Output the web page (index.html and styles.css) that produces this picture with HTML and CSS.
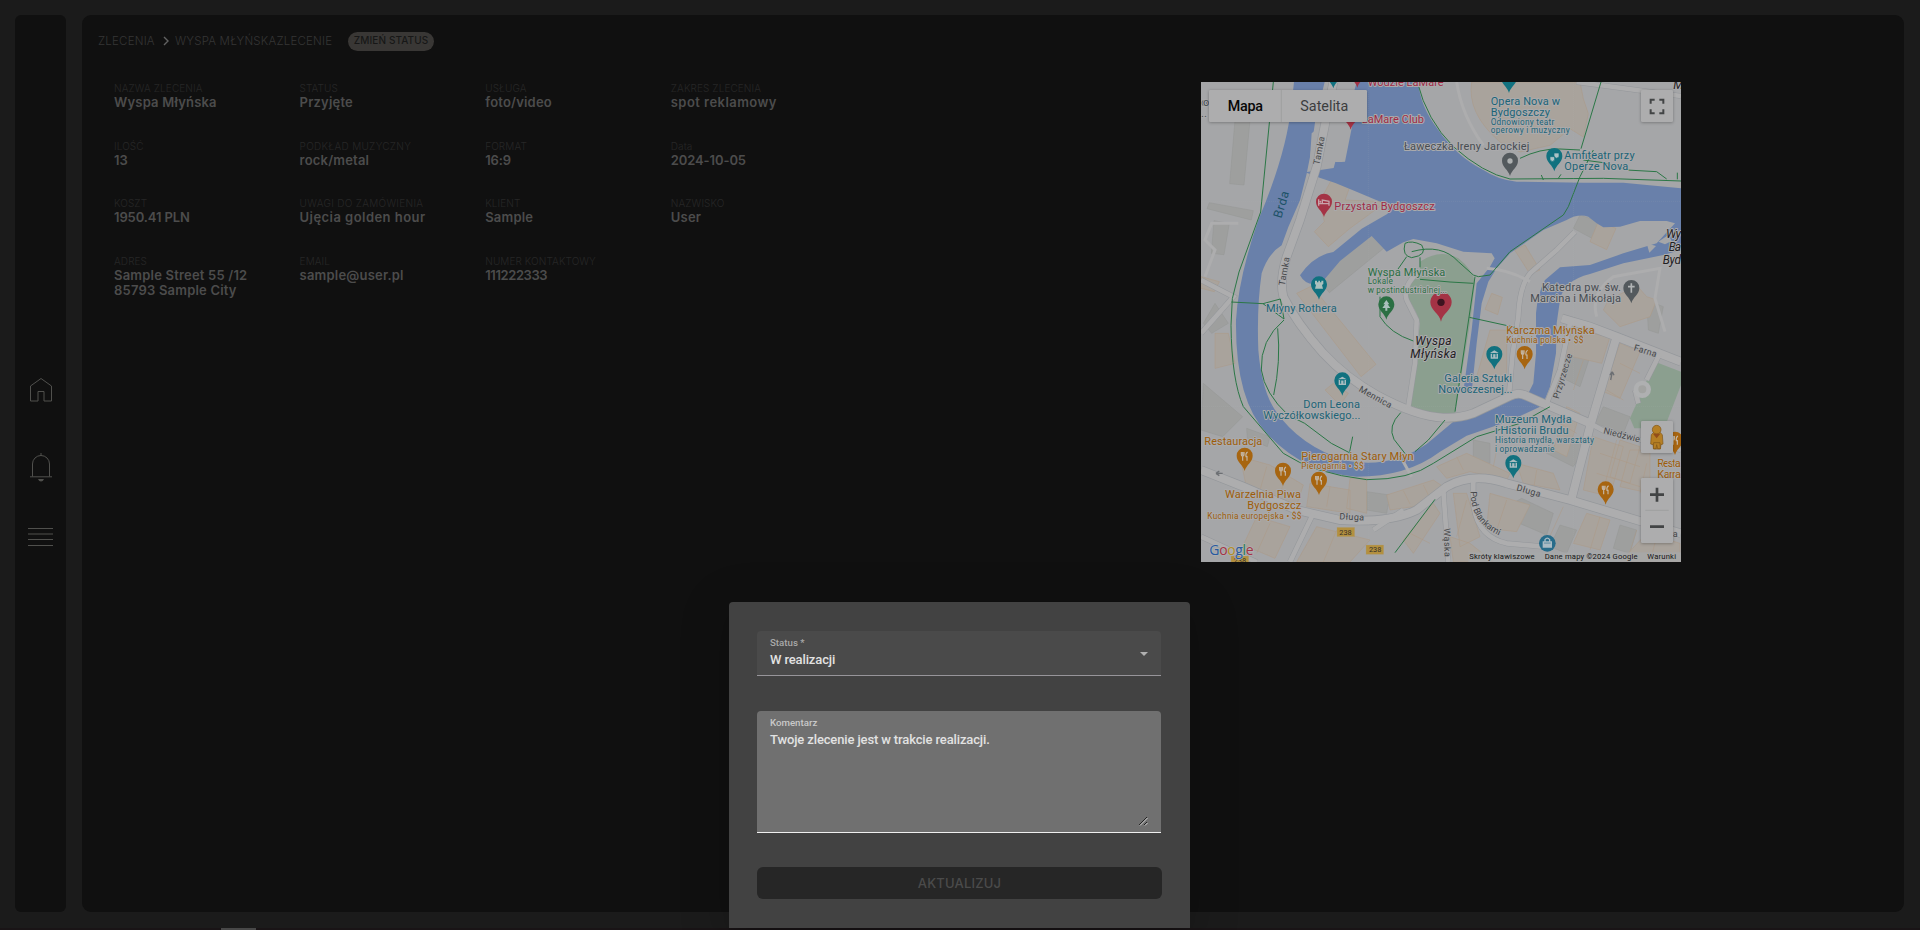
FILE: index.html
```html
<!DOCTYPE html>
<html lang="pl">
<head>
<meta charset="utf-8">
<title>Zlecenie</title>
<link rel="stylesheet" href="styles.css">
</head>
<body>
<div class="shell">
  <nav class="side">
    <svg class="ico" width="26" height="26" viewBox="0 0 26 26"><path d="M2.500 24V9L13 1.500 23.500 9v15H16V14.500h-6V24z"/></svg>
    <svg class="ico bell" width="26" height="30" viewBox="0 0 26 30"><path d="M4.500 24.500V12a8.500 8.500 0 0 1 17 0v12.500M2 24.800h22M13 1v3"/><path class="fill" d="M10 27h6q-1 2.500-3 2.500t-3-2.500z"/></svg>
    <svg class="ico menu" width="26" height="20" viewBox="0 0 26 20"><path d="M0 1.500h25M0 7h25M0 12.500h25M0 18.500h25"/></svg>
  </nav>
  <main class="main">
    <header class="crumbs">
      <span>ZLECENIA</span>
      <svg width="6" height="10" viewBox="0 0 6 10"><path d="M1 1l4 4-4 4"/></svg>
      <span class="current">WYSPA MŁYŃSKAZLECENIE</span>
      <button class="chip">ZMIEŃ STATUS</button>
    </header>
    <div class="content">
      <dl class="grid">
        <div><dt>NAZWA ZLECENIA</dt><dd>Wyspa Młyńska</dd></div>
        <div><dt>STATUS</dt><dd>Przyjęte</dd></div>
        <div><dt>USŁUGA</dt><dd>foto/video</dd></div>
        <div><dt>ZAKRES ZLECENIA</dt><dd class="wide">spot reklamowy</dd></div>
        <div><dt>ILOŚĆ</dt><dd class="num">13</dd></div>
        <div><dt class="wide">PODKŁAD MUZYCZNY</dt><dd>rock/metal</dd></div>
        <div><dt>FORMAT</dt><dd class="num">16:9</dd></div>
        <div><dt>Data</dt><dd class="num">2024-10-05</dd></div>
        <div><dt>KOSZT</dt><dd class="num">1950.41 PLN</dd></div>
        <div><dt class="wide">UWAGI DO ZAMÓWIENIA</dt><dd class="wide">Ujęcia golden hour</dd></div>
        <div><dt>KLIENT</dt><dd>Sample</dd></div>
        <div><dt>NAZWISKO</dt><dd>User</dd></div>
        <div><dt>ADRES</dt><dd>Sample Street 55 /12<br>85793 Sample City</dd></div>
        <div><dt>EMAIL</dt><dd>sample@user.pl</dd></div>
        <div><dt>NUMER KONTAKTOWY</dt><dd class="tight">111222333</dd></div>
      </dl>
      <div class="map">
      <svg width="480" height="480" viewBox="33 36 1440 1440">
        <defs>
          <path id="drop" d="M0 43C-5 24-24 16-24-3a24 24 0 0 1 48 0C24 16 5 24 0 43z"/>
          <path id="fork" d="M-10-14v8q0 4 4 4v14M-6-14v10M-2-14v8q0 4-4 4M9-14q-7 3-5 14h3v12" fill="none" stroke="#c4b7a6" stroke-width="3.500"/>
          <path id="museum" d="M-13-6L0-14l13 8zM-11-4h22v15h-22z" fill="#a9bcc0"/>
          <path id="roads" d="M430 36L380 290 330 450 290 560Q268 630 280 680 320 760 400 850 470 925 560 975 680 1040 760 1043 810 1045 850 1030L960 978Q985 965 1010 978L1060 1000 1200 1060M33 1200L160 1250 320 1320 450 1350Q600 1360 680 1320L770 1250Q850 1205 950 1240L1140 1290 1473 1390M1115 745L1200 770 1280 800 1473 875M1280 800L1250 900 1200 1070 1145 1285"/>
          <path id="lanes" d="M655 1010L675 880 680 750 650 690Q635 650 690 600M958 965L968 850 985 740Q988 650 1020 610L1100 540 1155 485M1140 760L1110 900 1070 1000M550 1380L640 1320M33 1400L200 1476M370 1330L300 1476M850 1225V1300Q860 1400 950 1420L1060 1430M760 1260L775 1476M33 630L130 680 95 720 33 790M1200 1060L1240 1082 1473 1140M1160 36L1473 78M1345 1000L1335 960M1370 930L1410 850"/>
        </defs>
        <rect class="land" x="33" y="36" width="1440" height="1440"/>

        <!-- buildings -->
        <g class="bgray">
          <path d="M135 150h45l-18 195-43-4zM58 398l132 24-6 28-133-34zM72 452l46 8-16 94-38-4zM40 940l118 100-60 60-65-20zM170 1075l70 25-8 30-60-25zM545 478l48 47-175 143-35-43zM1170 435l75 25-30 50-65-35z"/>
          <path d="M1150 810l60 20-40 120-60-30zM1240 1010l80 30-20 50-85-30zM1070 1150l60-60 60 40-40 60zM850 1110l50 10v60h-50zM950 1310l45-25 95 45-20 65-140-60zM1110 1365l50 15-30 70-50-20zM530 1265l70 10-10 55-60-10zM1290 1365l50 15-20 70-50-15zM40 760l35-60 40 60-50 30zM1370 690l50 20-15 80-30-10z"/>
        </g>
        <g class="beige">
          <path d="M430 320l55 15-20 55 125 5-110 80-65 55-42-45 30-30-15-60zM320 670l45-22 193 235-45 37zM430 940l45 30-25 35-45-45zM845 36h325l10 50 15 45-15 70-40-25-60 50-90 20-60-30Q830 130 845 36zM1005 525l45 75-30 12-46-72zM1225 455l53 20-28 64-50-24zM905 670l32 12-14 52-38-16z"/>
          <path d="M1255 690l60-30 20-20 35 40 30 10-20 50-90 30-50-50zM900 780h50v130l-60 30-30-20zM1140 780l120 20-25 80-110-25zM1290 820l60 25-60 140-50-20zM75 790h40l20 90-60 15zM33 620l55 15-15 30-40-10zM150 1160l90 25 100 60-20 60-150-50zM360 1240l120 20v70l-130-20zM480 1225h50v105l-60-15zM590 1275l140-45 30 20-90 60-70 10zM200 1340l100 30-45 95-95-40zM380 1370l160 40-60 66H320zM640 1410l90-110 20 30-80 120z"/>
          <path d="M740 1190l90-40 130 60-10 20-110-25-70 20zM980 1180l110 30 20 50-110-20zM1210 1100l90 30-40 150-80-20zM1320 1140h60v130l-90-20zM790 1270h40l40 130-60 30zM900 1270l120 35-40 80-90-10zM1190 1330l70 20-30 90-80-20zM1370 1390l100 30v56H1290zM780 1400l60 20 70 56H790zM1130 1010l40 20-40 130-40-20zM1290 1110l60 20-30 110-60-20z"/>
        </g>
        <path class="parcels" d="M230 1190l-20 70M290 1215l-25 70M420 1250l-10 60M640 1262l20 40M700 1245l20 40M1180 870l-30 90M1290 880l60 30M1250 960l50 30M1280 1110l-40 150M1230 1150l120 40M1220 1210l130 40M1110 1060l50 30M920 1140l-10 50M800 1160l20 40M1040 1200l-10 60M1120 1310l-50 110M1230 1340l-30 100M1340 1380l-30 96M1400 1400l-20 76M830 1290l-30 110M950 1290l-30 90M240 1360l-40 90M440 1380l-40 96M660 1390l60 30M1370 1180l-20 90"/>
        <path class="park" d="M690 575Q750 535 805 565 850 600 855 640L840 760 795 1032Q710 1030 658 1015L690 760Q680 720 655 690 640 640 690 620z"/>
        <path class="park" d="M1395 875l78 30v40l-50 130-90 0-13-30z"/>

        <!-- rivers -->
        <path class="water" d="M312 36h92l-28 115-16 110-10 50-20 80-35 80-20 55q-40 24-60 84-15 100-10 230Q215 960 255 1020 330 1130 470 1172q130 25 240-50l80-67 170-65 45-10 55 15-10 15-90 42-130 45-80 48q-100 75-250 75-160-10-270-130Q135 990 138 750 146 620 205 450 290 250 305 100z"/>
        <path class="water" d="M500 36h185Q690 110 745 180q55 80 135 120 45 30 100 35l200 3h120l173 17v185l-53 15-120 25-100 32q-80 20-90 78l-10 70-2 90-18 100-20 50-50-20 20-40 8-90v-120q5-60 27-100l45-38 90-7 100-35 100-30 55-60-25-7h-80l-60 17-50 2-20-12-25-20q-30-10-65 10l-70 30-100 70-40 45-25 40-20 65-15 120-15 145h-25l25-185 15-140 40-50 14-25-9-15-85-5-80-25-70-13-30 10-50 28-45-47-95 75-55 65q-45 15-65-22 40-60 100-70l85-70 78-45 3-25-100-42-60-25-45-15-45-17 85-13z"/>
        <path class="land" d="M365 190l50-40h75l-25 125q-50 5-105-12zM1370 520l28 8-20 20zM1405 515l30-20 10 18-20 10z"/>

        <!-- streets -->
        <g class="casing"><use href="#roads" stroke-width="28"/><use href="#lanes" stroke-width="17"/></g>
        <g class="street"><use href="#roads" stroke-width="24"/><use href="#lanes" stroke-width="14"/><path d="M800 36q15 100 80 190M45 620l30-80-30-30 20-50h80M890 595q70 5 130 40M1220 740q-20-70 50-120l140-25-15 90 30 100M640 1175l25 45" stroke-width="9"/></g>
        <circle cx="1357" cy="958" r="19" fill="#a2a3a1" stroke="#afb0b1" stroke-width="14"/>

        <!-- footpaths -->
        <g class="path">
          <path d="M250 36l-38 390-65 180-20 80-4 80Q125 930 160 1010l120 140q90 60 250 79 130 0 200-49l130-80 130-40 90-50M124 696l95 5 52-14 11 60-63-46M282 750Q210 810 214 900q10 70 80 135l50 25 80 60 54 28M263 775q10 100-12 200M478 1150l10-50M570 740q30 50 100 73M632 1028q-40 40-20 80l35 45M765 1050l-50 60-40 35M615 1448l120-160"/>
          <path d="M682 36Q710 150 790 230 880 310 960 327l280-2 233 8M1233 36l-60 200M1210 240l-40 80-35 90-15 25-160 110-60 70-35 5-15-5-45-40q-50-55-140-30M690 628l90 8 70 4M645 520q20-10 50 5 20 30-30 38-30-5-20-43zM650 560l-35 50M690 562v30M838 742l137 30M990 265q60-30 120-28l60 3M1180 270l60 8 70 22 90 5 30 22M855 620L795 1025M1060 330l-6-15M1105 325l8-12M1462 328v-20M570 740v-60"/>
        </g>
        <path class="tiles" d="M535 36v1440M1151 36v1440M33 394h1440M33 1010h1440"/>
        <path d="M98 1210H78m0 0l10-7m-10 7l10 7M1262 930l5-25m0 0l-7 10m7-10l5 11" fill="none" stroke="#6c6f73" stroke-width="4"/>

        <!-- pins -->
        <g class="teal"><use href="#drop" x="430" y="12"/><use href="#drop" x="387" y="646"/><use href="#drop" x="957" y="26"/><use href="#drop" x="1093" y="261"/><use href="#drop" x="457" y="934"/><use href="#drop" x="913" y="855"/><use href="#drop" x="970" y="1182"/></g>
        <g class="red"><use href="#drop" x="502" y="10"/><use href="#drop" x="482" y="136"/><use href="#drop" x="402" y="398"/></g>
        <g class="grayp"><use href="#drop" x="960" y="275"/><use href="#drop" x="1324" y="657"/></g>
        <g class="orange"><use href="#drop" x="164" y="1160"/><use href="#drop" x="279" y="1205"/><use href="#drop" x="387" y="1232"/><use href="#drop" x="1004" y="855"/><use href="#drop" x="1247" y="1261"/><use href="#drop" x="1455" y="1112"/></g>
        <use href="#drop" x="589" y="706" fill="#2b6f43"/>
        <use href="#fork" x="164" y="1160"/><use href="#fork" x="279" y="1205"/><use href="#fork" x="387" y="1232"/><use href="#fork" x="1004" y="855"/><use href="#fork" x="1247" y="1261"/><use href="#fork" x="1455" y="1112"/>
        <use href="#museum" x="457" y="934"/><use href="#museum" x="913" y="855"/><use href="#museum" x="970" y="1182"/>
        <path d="M452 941v-11h10v11M908 862v-11h10v11M965 1189v-11h10v11" stroke="#11717f" stroke-width="3" fill="none"/>
        <path d="M375 632h6v5h4v-5h5v5h4v-5h6v10l-4 3 3 11h-24l3-11-3-3zM589 690l9 13h-5l8 11h-9v8h-6v-8h-9l8-11h-5z" fill="#aac0bd"/>
        <path d="M386 388v19m0-6h31v6m0-6v-7l-20-4v11" stroke="#c8a3aa" stroke-width="4" fill="none"/><circle cx="391" cy="395" r="3" fill="#c8a3aa"/>
        <circle cx="960" cy="273" r="8" fill="#adb0b1"/><path d="M1324 640v28m-10-18h20" stroke="#b1b4b5" stroke-width="5"/>
        <path d="M1080 260h14v10q-7 9-14 0zM1092 249h15v12q-7 7-15 0z" fill="#adc2c5" stroke="#11717f" stroke-width="2"/>
        <path d="M753 755c-4-24-32-34-32-58a32 32 0 0 1 64 0c0 24-28 34-32 58z" fill="#a43345"/><circle cx="753" cy="697" r="11" fill="#3d1420"/>
        <circle cx="1072" cy="1420" r="25" fill="#276c8a"/><path d="M1060 1416h24v15h-24zM1065 1415v-6q7-9 14 0v6" fill="none" stroke="#a9bbc4" stroke-width="4"/><path d="M1060 1420h24v11h-24z" fill="#a9bbc4"/>

        <!-- labels -->
        <g class="lbl tealt">
          <text x="902" y="106" textLength="208">Opera Nova w</text><text x="902" y="139" textLength="178">Bydgoszczy</text>
          <text class="sub" x="902" y="164" textLength="191">Odnowiony teatr</text><text class="sub" x="902" y="190" textLength="237">operowy i muzyczny</text>
          <text x="1123" y="266" textLength="211">Amfiteatr przy</text><text x="1123" y="300" textLength="192">Operze Nova</text>
          <text x="228" y="726" textLength="212">Młyny Rothera</text>
          <text x="340" y="1014" textLength="170">Dom Leona</text><text x="220" y="1047" textLength="291">Wyczółkowskiego...</text>
          <text x="763" y="935" textLength="203">Galeria Sztuki</text><text x="745" y="968" textLength="222">Nowoczesnej...</text>
          <text x="915" y="1059" textLength="230">Muzeum Mydła</text><text x="915" y="1092" textLength="221">i Historii Brudu</text>
          <text class="sub" x="915" y="1120" textLength="297">Historia mydła, warsztaty</text><text class="sub" x="915" y="1146" textLength="178">i oprowadzanie</text>
        </g>
        <g class="lbl grayt"><text x="34" y="108" textLength="24">oo</text><text x="33" y="142">..</text></g>
        <g class="lbl redt"><text x="533" y="48" textLength="228">Wodzie LaMare</text><text x="515" y="158" textLength="187">LaMare Club</text><text x="433" y="419" textLength="301">Przystań Bydgoszcz</text></g>
        <g class="lbl grayt"><text x="642" y="240" textLength="376">Ławeczka Ireny Jarockiej</text><text x="1056" y="663" textLength="237">Katedra pw. św.</text><text x="1021" y="696" textLength="272">Marcina i Mikołaja</text></g>
        <g class="lbl greent"><text x="533" y="617" textLength="233">Wyspa Młyńska</text><text class="sub" x="533" y="642" textLength="76">Lokale</text><text class="sub" x="533" y="668" textLength="238">w postindustrialnej...</text></g>
        <g class="lbl oranget">
          <text x="43" y="1124" textLength="174">Restauracja</text><text x="334" y="1169" textLength="337">Pierogarnia Stary Młyn</text><text class="sub" x="334" y="1197" textLength="187">Pierogarnia • $$</text>
          <text x="105" y="1284" textLength="228">Warzelnia Piwa</text><text x="172" y="1318" textLength="162">Bydgoszcz</text><text class="sub" x="52" y="1346" textLength="282">Kuchnia europejska • $$</text>
          <text x="949" y="792" textLength="265">Karczma Młyńska</text><text class="sub" x="949" y="818" textLength="231">Kuchnia polska • $$</text>
          <text x="1402" y="1191" textLength="70">Resta</text><text x="1402" y="1225" textLength="71">Karra</text>
        </g>
        <g class="lbl area"><text x="676" y="826" textLength="109">Wyspa</text><text x="661" y="864" textLength="138">Młyńska</text><text x="1428" y="504" textLength="45">Wy</text><text x="1436" y="542" textLength="37">Ba</text><text x="1418" y="581" textLength="55">Byd</text><text x="1450" y="58" textLength="23">M</text></g>
        <g class="lbl road">
          <text transform="translate(388 286) rotate(-79)" textLength="86">Tamka</text><text transform="translate(284 648) rotate(-80)" textLength="86">Tamka</text>
          <text transform="translate(505 963) rotate(29)" textLength="108">Mennica</text><text transform="translate(448 1348) rotate(3)" textLength="74">Długa</text><text transform="translate(978 1261) rotate(16)" textLength="74">Długa</text>
          <text transform="translate(1106 988) rotate(-73)" textLength="140">Przyrzecze</text><text transform="translate(1330 841) rotate(17)" textLength="70">Farna</text><text transform="translate(1239 1090) rotate(14)" textLength="112">Niedźwie</text>
          <text transform="translate(762 1375) rotate(89)" textLength="86">Wąska</text>
          <path id="blank" d="M842 1264Q840 1365 942 1402" fill="none" stroke="none"/><text><textPath href="#blank" textLength="168">Pod Blankami</textPath></text>
          <text x="1448" y="1400">a</text>
        </g>
        <text class="river" transform="translate(274 446) rotate(-73)" textLength="82">Brda</text>
        <g class="shield"><rect x="441" y="1372" width="53" height="28"/><rect x="528" y="1425" width="53" height="28"/><rect x="123" y="1458" width="53" height="28"/><text x="448" y="1394">238</text><text x="537" y="1447">238</text><text x="131" y="1480">238</text></g>
        <rect x="835" y="1447" width="638" height="29" fill="#a7a8a9" opacity=".75"/>
        <g class="legal"><text x="838" y="1467" textLength="196">Skróty klawiszowe</text><text x="1064" y="1467" textLength="279">Dane mapy ©2024 Google</text><text x="1372" y="1467" textLength="86">Warunki</text></g>
        <text class="glogo" x="58" y="1456" textLength="133"><tspan fill="#27599f">G</tspan><tspan fill="#a43345">o</tspan><tspan fill="#b18d24">o</tspan><tspan fill="#27599f">g</tspan><tspan fill="#287b50">l</tspan><tspan fill="#a43345">e</tspan></text>

        <!-- controls -->
        <g class="ctl"><rect x="57" y="60" width="474" height="96" rx="4"/><rect x="1353" y="60" width="96" height="96" rx="4"/><rect x="1353" y="1053" width="96" height="96" rx="4"/><rect x="1353" y="1224" width="96" height="195" rx="4"/></g>
        <path d="M274 60v96M1366 1321h70" stroke="#979899" stroke-width="2"/>
        <text class="tab on" x="113" y="123" textLength="106">Mapa</text><text class="tab" x="331" y="123" textLength="144">Satelita</text>
        <path d="M1382 101V89h12M1408 89h12v12M1420 118v12h-12M1394 130h-12v-12" fill="none" stroke="#424445" stroke-width="6"/><path d="M1380 1274h42M1401 1253v42M1380 1370h42" stroke="#424445" stroke-width="8"/>
        <g fill="#b57f24" stroke="#7f5518" stroke-width="2"><path d="M1384 1094l8-8h17l8 8 2 28-6 2-2 13h-20l-2-13-7-2z"/><path d="M1391 1118l-1 18h8l2-12 3 12h8l-1-18z"/><circle cx="1400" cy="1079" r="13"/></g><path d="M1389 1091l11 14 11-14z" fill="#934d18"/>
      </svg>
      </div>
    </div>
  </main>
</div>
<footer class="strip"><i></i></footer>

<div class="overlay">
  <form class="dialog">
    <div class="field">
      <label>Status *</label>
      <p>W realizacji</p>
      <svg class="caret" width="8" height="4" viewBox="0 0 8 4"><path d="M0 0h8L4 4z"/></svg>
    </div>
    <div class="field area-field">
      <label>Komentarz</label>
      <p>Twoje zlecenie jest w trakcie realizacji.</p>
      <svg class="grip" width="10" height="10" viewBox="0 0 10 10"><path d="M1 9l8-8M6 9l3-3" stroke="#222"/><path d="M2 9.500l7.500-7.500M7 9.500l2.500-2.500" stroke="#ccc"/></svg>
    </div>
    <button type="button" class="submit">AKTUALIZUJ</button>
  </form>
</div>
</body>
</html>
```
FILE: styles.css
```css
* { box-sizing: border-box; }
body { margin: 0; height: 930px; overflow: hidden; background: #1b1b1b; font-family: Inter, sans-serif; }
.shell { display: flex; gap: 16px; height: 928px; padding: 15px 16px 16px 15px; }
.side { width: 51px; border-radius: 6px; background: #101010; display: flex; flex-direction: column; align-items: center; padding-top: 362px; }
.ico { display: block; fill: none; stroke: #50504d; stroke-width: 1; }
.ico .fill { fill: #50504d; stroke: none; }
.bell { margin-top: 49px; }
.menu { margin-top: 45px; }
.main { flex: 1; border-radius: 9px; background: #101010; padding: 16px 16px; }
.crumbs { display: flex; align-items: center; height: 20px; color: #353535; font-size: 11.5px; font-weight: 300; letter-spacing: .2px; white-space: nowrap; }
.crumbs svg { margin: 0 6px 0 7px; fill: none; stroke: #626262; stroke-width: 1.4; }
.crumbs span:first-child { width: 58px; }
.current { width: 158px; }
.chip { width: 86px; height: 19px; margin-left: 15px; padding: 0 0 2px; border: 0; border-radius: 10px; background: #393735; color: #171717; font: 500 10px Inter, sans-serif; letter-spacing: .1px; }
.content { display: flex; justify-content: space-between; align-items: flex-start; padding: 15px 207px 0 16px; }
.grid { display: grid; grid-template-columns: repeat(4, 185.6px); grid-auto-rows: 57.7px; margin: 15px 0 0; }
dt { color: #272727; font-size: 10px; font-weight: 300; line-height: 14px; letter-spacing: .1px; white-space: nowrap; }
dt.wide { letter-spacing: .3px; }
dd { margin: 0; color: #4c4c4c; font-size: 13px; font-weight: 600; line-height: 15px; letter-spacing: .2px; white-space: nowrap; }
dd.wide { letter-spacing: .45px; }
.num { letter-spacing: -.1px; }
.tight { letter-spacing: -.4px; }
.map { width: 480px; height: 480px; margin-top: 16px; overflow: hidden; }
.map svg { display: block; font-family: Roboto, sans-serif; }
.land { fill: #a5a6a8; }
.bgray { fill: #9e9f9e; stroke: #959695; stroke-width: 1.5; }
.beige { fill: #a9a39c; stroke: #ac9885; stroke-width: 1.5; }
.parcels { fill: none; stroke: #ac9885; stroke-width: 1.5; }
.park { fill: #8b9f8f; }
.water { fill: #6980aa; }
.casing { fill: none; stroke: #94979b; }
.street { fill: none; stroke: #adadae; }
.path { fill: none; stroke: #2b7746; stroke-width: 3; stroke-linejoin: round; }
.tiles { fill: none; stroke: #b5b8bd; stroke-width: 1; stroke-dasharray: 3 3; opacity: .4; }
.teal { fill: #11717f; }
.red { fill: #a43345; }
.grayp { fill: #53595d; }
.orange { fill: #a76510; }
.lbl { font-size: 33px; paint-order: stroke; stroke: #aaaaac; stroke-width: 6px; stroke-linejoin: round; }
.lbl .sub { font-size: 25px; }
.tealt { fill: #1c6477; }
.redt { fill: #a02a46; }
.grayt { fill: #484d52; }
.greent { fill: #2b7044; }
.oranget { fill: #9e5d0a; }
.area { fill: #1f2022; font-style: italic; font-size: 36px; }
.road { fill: #444648; font-size: 27px; stroke-width: 4px; }
.river { fill: #1c5267; font-size: 37px; }
.shield rect { fill: #b3903f; stroke: #a99c80; stroke-width: 1; }
.shield text { fill: #33302a; font-size: 22px; }
.legal { fill: #161616; font-size: 23px; }
.glogo { font: 500 42px "Open Sans", sans-serif; paint-order: stroke; stroke: #b1b2b3; stroke-width: 4px; }
.ctl { fill: #adadae; filter: drop-shadow(0 2px 4px rgba(0, 0, 0, .3)); }
.tab { fill: #3c3d3e; font-size: 43px; }
.tab.on { fill: #080808; font-weight: 500; }
.strip { height: 2px; background: #191416; padding-left: 221px; }
.strip i { display: block; width: 35px; height: 2px; background: #484848; }
.overlay { position: fixed; inset: 0; display: flex; justify-content: center; align-items: flex-end; padding: 0 1px 2px 0; }
.dialog { width: 461px; height: 326px; padding: 29px 28px 0; border-radius: 4px 4px 0 0; background: #424242; box-shadow: 0 11px 15px -7px rgba(0, 0, 0, .2), 0 9px 46px 8px rgba(0, 0, 0, .14); font-family: Roboto, sans-serif; }
.field { position: relative; width: 404px; height: 45px; padding: 6px 13px; border-radius: 4px 4px 0 0; background: #4a4a4a; border-bottom: 1px solid #97959a; color: #e2e2e2; }
.field label { display: block; font-size: 9.7px; font-weight: 500; line-height: 12px; color: #a9a9a9; }
.field p { margin: 3px 0 0; font-size: 13px; font-weight: 500; line-height: 16px; letter-spacing: -.13px; }
.caret { position: absolute; right: 13px; top: 21px; fill: #b0b0b0; }
.area-field { height: 122px; margin-top: 35px; background: #707070; border-color: #f0f0f0; }
.area-field label { color: #c9c9c9; }
.grip { position: absolute; right: 13px; bottom: 6px; fill: none; }
.submit { display: block; width: 405px; height: 32px; margin-top: 34px; padding: 0; border: 0; border-radius: 6px; background: #262626; color: #4b4b4b; font: 500 13px Inter, sans-serif; letter-spacing: .2px; }
```
